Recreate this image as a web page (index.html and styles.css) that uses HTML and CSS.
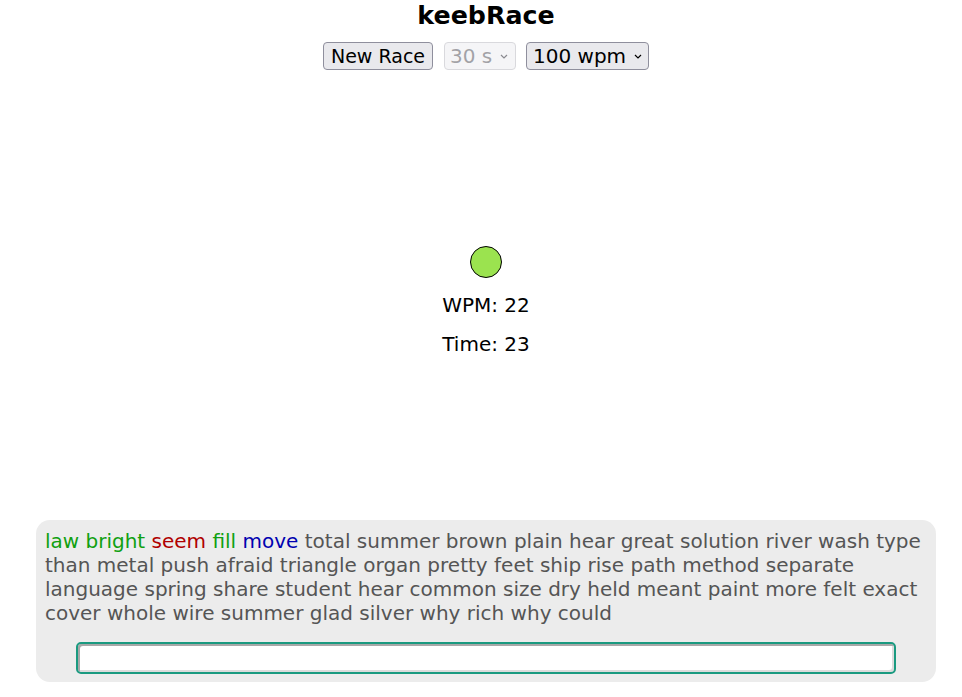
FILE: index.html
```html
<!DOCTYPE html>
<html>
<head>
<meta charset="utf-8">
<link rel="stylesheet" href="styles.css">
</head>
<body>
<main class="app">
  <h1 class="title">keebRace</h1>
  <div class="controls">
    <button class="btn">New Race</button>
    <span class="select-wrap is-disabled">
      <select class="sel" disabled><option>30 s</option></select>
      <svg class="chev chev-dim" width="8" height="5" viewBox="0 0 8 5"><path d="M1 1 L4 4 L7 1" fill="none" stroke="currentColor" stroke-width="1.2"/></svg>
    </span>
    <span class="select-wrap">
      <select class="sel sel-wide"><option>100 wpm</option></select>
      <svg class="chev" width="8" height="5" viewBox="0 0 8 5"><path d="M1 1 L4 4 L7 1" fill="none" stroke="currentColor" stroke-width="1.2"/></svg>
    </span>
  </div>
  <div class="track">
    <div class="racer"></div>
    <div class="stat">WPM: 22</div>
    <div class="stat">Time: 23</div>
  </div>
  <section class="panel">
    <p class="words"><span class="ok">law bright </span><span class="bad">seem </span><span class="ok">fill </span><span class="cur">move</span> total summer brown plain hear great solution river wash type than metal push afraid triangle organ pretty feet ship rise path method separate language spring share student hear common size dry held meant paint more felt exact cover whole wire summer glad silver why rich why could</p>
    <input class="typing" type="text" autofocus>
  </section>
</main>
</body>
</html>
```

FILE: styles.css
```css
html, body {
  margin: 0;
  padding: 0;
  background: #fff;
}
body {
  font-family: "DejaVu Sans", sans-serif;
  color: #000;
}
.app {
  padding-left: 10px;
  display: flex;
  flex-direction: column;
  align-items: center;
}
.title {
  margin: 0;
  font-size: 25.3px;
  line-height: 32px;
  font-weight: bold;
}
.controls {
  margin-top: 10px;
  display: flex;
  gap: 10px;
  align-items: center;
}
.btn, .sel {
  font-family: "DejaVu Sans", sans-serif;
  font-size: 19px;
  height: 28px;
  box-sizing: border-box;
  border: 1px solid #8f8f9d;
  border-radius: 4px;
  background: #e9e9ed;
  color: #000;
  margin: 0;
}
.btn {
  padding: 0 7px;
}
.select-wrap {
  position: relative;
  display: inline-flex;
  color: #000;
}
.sel {
  -webkit-appearance: none;
  appearance: none;
  font-size: 20px;
  padding: 0 22px 0 6px;
}
.sel-wide {
  padding-right: 21px;
}
.chev {
  position: absolute;
  right: 7px;
  top: 12px;
  pointer-events: none;
}
.chev-dim {
  right: 8px;
}
.is-disabled {
  color: #8a8a90;
  margin-left: 1px;
}
.sel:disabled {
  color: #7c7c82;
  border-color: #c9c9cf;
  background: #f2f2f4;
  padding-left: 5px;
}
.track {
  margin-top: 176px;
  display: flex;
  flex-direction: column;
  align-items: center;
}
.racer {
  width: 30px;
  height: 30px;
  border-radius: 50%;
  background: #9be34f;
  border: 1px solid #000;
}
.stat {
  font-size: 20px;
  line-height: 24px;
  margin-top: 15px;
}
.panel {
  margin-top: 164px;
  width: 900px;
  box-sizing: border-box;
  background: #ececec;
  border-radius: 14px;
  padding: 9px 10px 8px 10px;
  display: flex;
  flex-direction: column;
  align-items: center;
}
.words {
  margin: 0 0 0 -1px;
  align-self: stretch;
  font-size: 20px;
  line-height: 24px;
  color: #555;
}
.ok { color: #10a010; }
.bad { color: #b00000; }
.cur { color: #0000b0; }
.typing {
  margin-top: 17px;
  width: 820px;
  height: 32px;
  box-sizing: border-box;
  border: 2px solid #1a9a80;
  box-shadow: inset 2px 2px 0 #a8a8a8, inset -2px -2px 0 #dcdcdc;
  border-radius: 5px;
  outline: none;
  padding: 0 4px;
  font-size: 20px;
  font-family: "DejaVu Sans", sans-serif;
  background: #fff;
}
```
